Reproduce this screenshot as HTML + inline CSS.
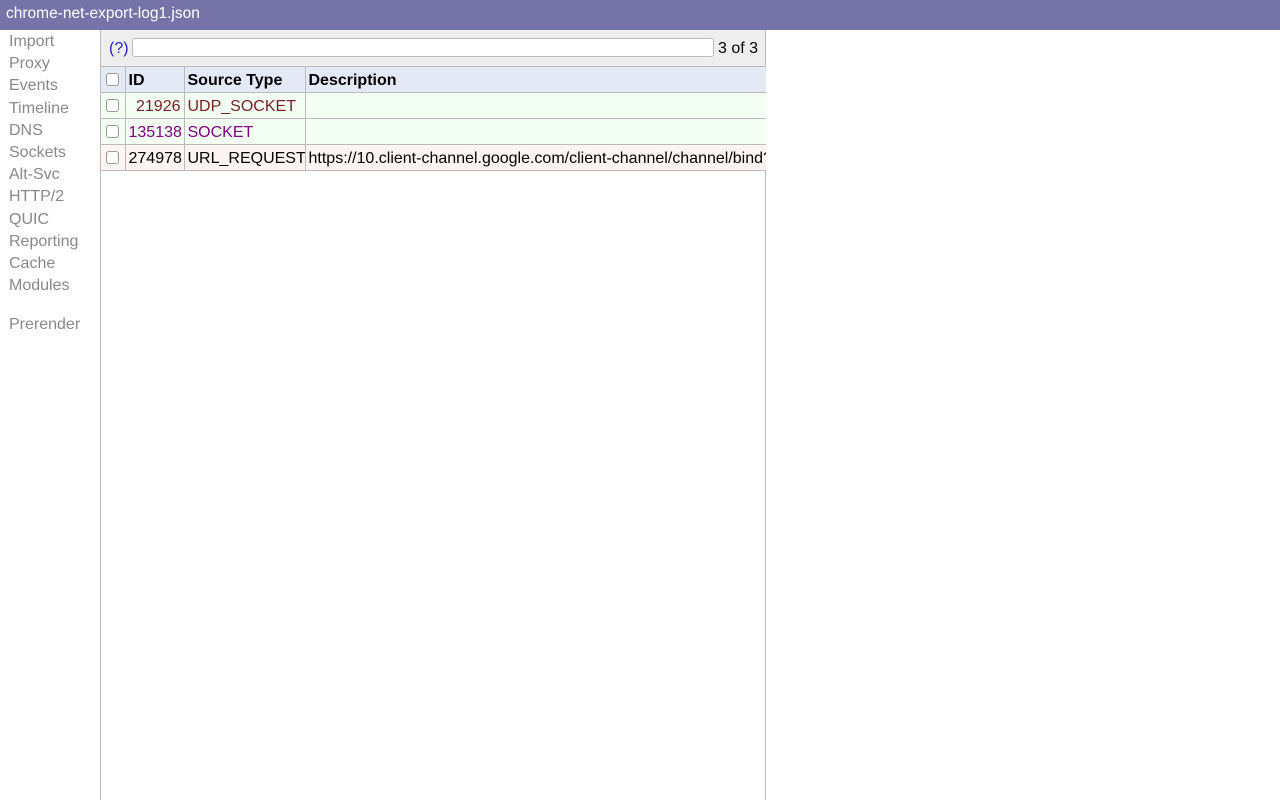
<!DOCTYPE html>
<html><head><meta charset="utf-8"><style>
*{box-sizing:border-box;margin:0;padding:0}
body{width:1280px;height:800px;overflow:hidden;background:#fff;font-family:"Liberation Sans",Arial,sans-serif;font-size:16px;position:relative}
#top{position:absolute;left:0;top:0;width:1280px;height:30px;background:#7573a7;color:#fff;font-size:15.5px;padding:5px 0 0 6px}
#side{position:absolute;left:0;top:30px;width:101px;height:770px;border-right:1px solid #bbb}
#side div{color:#888;font-size:16px;line-height:22.2px;padding-left:9px;padding-top:0}
#side div:first-child{margin-top:1px}
#main{position:absolute;left:101px;top:30px;width:665px;height:770px;border-right:1px solid #bbb}
#filter{height:36px;background:#eee;position:relative}
#filter .q{position:absolute;left:8px;top:10px;color:#22c}
#filter .box{position:absolute;left:31px;top:8px;width:582px;height:19px;border:1px solid #bbb;border-radius:3px;background:#fff}
#filter .c{position:absolute;left:617px;top:10px;color:#000}
table{border-collapse:collapse;width:665px;table-layout:fixed}
td{border:1px solid #bbb;height:26px;white-space:nowrap;overflow:hidden;padding:2px 3px 0;font-size:16px}
tr.h td{background:#e3e9f5;font-weight:bold}
tr.g td{background:#f4fff4}
tr.r td{background:#fff4f4}
.cb{width:13px;height:13px;border:1px solid #999;border-radius:3px;background:#fff;display:inline-block;vertical-align:middle}
td:first-child{border-left:none;text-align:center;padding:0}
tr td:last-child{border-right:none}
</style></head><body>
<div id="top">chrome-net-export-log1.json</div>
<div id="side">
<div>Import</div><div>Proxy</div><div>Events</div><div>Timeline</div><div>DNS</div><div>Sockets</div><div>Alt-Svc</div><div>HTTP/2</div><div>QUIC</div><div>Reporting</div><div>Cache</div><div>Modules</div><div style="margin-top:17px">Prerender</div>
</div>
<div id="main">
<div id="filter"><span class="q">(?)</span><div class="box"></div><span class="c">3 of 3</span></div>
<table>
<colgroup><col style="width:24px"><col style="width:59px"><col style="width:121px"><col></colgroup>
<tr class="h"><td><span class="cb"></span></td><td>ID</td><td>Source Type</td><td>Description</td></tr>
<tr class="g" style="color:#7a1f1f"><td><span class="cb"></span></td><td style="text-align:right">21926</td><td>UDP_SOCKET</td><td></td></tr>
<tr class="g" style="color:#800080"><td><span class="cb"></span></td><td style="text-align:right">135138</td><td>SOCKET</td><td></td></tr>
<tr class="r"><td><span class="cb"></span></td><td style="text-align:right">274978</td><td>URL_REQUEST</td><td style="text-overflow:clip">https://10.client-channel.google.com/client-channel/channel/bind?ctype=hangouts</td></tr>
</table>
</div>
</body></html>
